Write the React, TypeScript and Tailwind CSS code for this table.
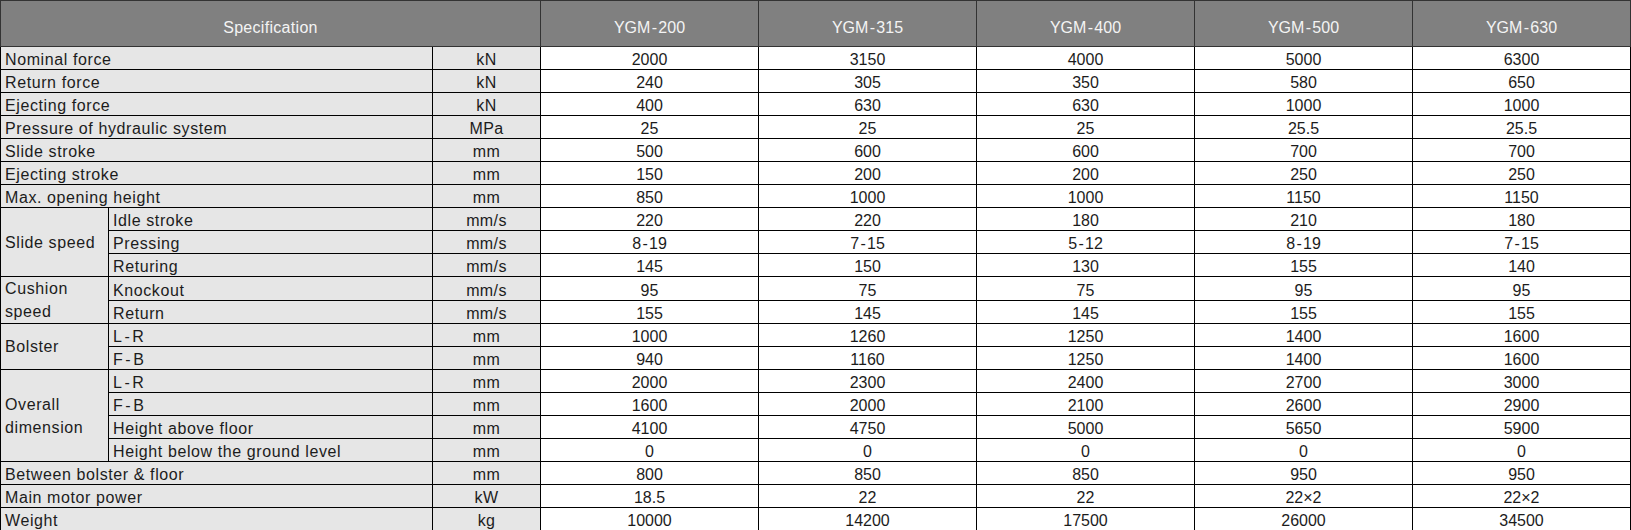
import React from 'react'

type Row = {
    label?: string
    group?: string[]
    span?: number
    sub?: string
    unit: string
    v: string[]
}

const models = ['YGM\u200a-\u200a200', 'YGM\u200a-\u200a315', 'YGM\u200a-\u200a400', 'YGM\u200a-\u200a500', 'YGM\u200a-\u200a630']

// widen the hyphen a little, like the source font does
const d = (s: string) => s.replace('-', '\u200a-\u200a')

const rows: Row[] = [
    { label: 'Nominal force', unit: 'kN', v: ['2000', '3150', '4000', '5000', '6300'] },
    { label: 'Return force', unit: 'kN', v: ['240', '305', '350', '580', '650'] },
    { label: 'Ejecting force', unit: 'kN', v: ['400', '630', '630', '1000', '1000'] },
    { label: 'Pressure of hydraulic system', unit: 'MPa', v: ['25', '25', '25', '25.5', '25.5'] },
    { label: 'Slide stroke', unit: 'mm', v: ['500', '600', '600', '700', '700'] },
    { label: 'Ejecting stroke', unit: 'mm', v: ['150', '200', '200', '250', '250'] },
    { label: 'Max. opening height', unit: 'mm', v: ['850', '1000', '1000', '1150', '1150'] },
    { group: ['Slide speed'], span: 3, sub: 'Idle stroke', unit: 'mm/s', v: ['220', '220', '180', '210', '180'] },
    { sub: 'Pressing', unit: 'mm/s', v: ['8-19', '7-15', '5-12', '8-19', '7-15'] },
    { sub: 'Returing', unit: 'mm/s', v: ['145', '150', '130', '155', '140'] },
    { group: ['Cushion', 'speed'], span: 2, sub: 'Knockout', unit: 'mm/s', v: ['95', '75', '75', '95', '95'] },
    { sub: 'Return', unit: 'mm/s', v: ['155', '145', '145', '155', '155'] },
    { group: ['Bolster'], span: 2, sub: 'L-R', unit: 'mm', v: ['1000', '1260', '1250', '1400', '1600'] },
    { sub: 'F-B', unit: 'mm', v: ['940', '1160', '1250', '1400', '1600'] },
    { group: ['Overall', 'dimension'], span: 4, sub: 'L-R', unit: 'mm', v: ['2000', '2300', '2400', '2700', '3000'] },
    { sub: 'F-B', unit: 'mm', v: ['1600', '2000', '2100', '2600', '2900'] },
    { sub: 'Height above floor', unit: 'mm', v: ['4100', '4750', '5000', '5650', '5900'] },
    { sub: 'Height below the ground level', unit: 'mm', v: ['0', '0', '0', '0', '0'] },
    { label: 'Between bolster & floor', unit: 'mm', v: ['800', '850', '850', '950', '950'] },
    { label: 'Main motor power', unit: 'kW', v: ['18.5', '22', '22', '22×2', '22×2'] },
    { label: 'Weight', unit: 'kg', v: ['10000', '14200', '17500', '26000', '34500'] },
]

const labelCell =
    'border border-black bg-[#e6e6e6] pl-[4px] text-left align-bottom leading-[18px] tracking-[0.6px] whitespace-nowrap'

export default function App() {
    return (
        <div className="h-[530px] w-[1631px] overflow-hidden bg-white font-['Liberation_Sans',Arial,sans-serif] text-[16px] text-[#1c1c1c]">
            <table className="w-[1630px] table-fixed border-collapse">
                <colgroup>
                    <col className="w-[108px]" />
                    <col className="w-[324px]" />
                    <col className="w-[108px]" />
                    <col className="w-[218px]" />
                    <col className="w-[218px]" />
                    <col className="w-[218px]" />
                    <col className="w-[218px]" />
                    <col className="w-[218px]" />
                </colgroup>
                <thead>
                    <tr className="h-[46px] bg-[#808080] text-[#f4f4f4]">
                        <th colSpan={3} className="border border-[#333] pt-[9px] align-middle font-normal tracking-[0.3px]">
                            Specification
                        </th>
                        {models.map((m) => (
                            <th key={m} className="border border-[#333] pt-[9px] align-middle font-normal">
                                {m}
                            </th>
                        ))}
                    </tr>
                </thead>
                <tbody>
                    {rows.map((r, i) => (
                        <tr key={i} className="h-[23px]">
                            {r.label && (
                                <td colSpan={2} className={labelCell}>
                                    {r.label}
                                </td>
                            )}
                            {r.group && (
                                <td
                                    rowSpan={r.span}
                                    className="border border-black bg-[#e6e6e6] pl-[4px] text-left align-middle leading-[23px] tracking-[0.6px] whitespace-nowrap"
                                >
                                    {r.group.map((g, j) => (
                                        <div key={j}>{g}</div>
                                    ))}
                                </td>
                            )}
                            {r.sub && <td className={labelCell}>{d(r.sub)}</td>}
                            <td className="border border-black bg-[#e6e6e6] text-center align-bottom leading-[18px] tracking-[0.4px]">
                                {r.unit}
                            </td>
                            {r.v.map((v, j) => (
                                <td key={j} className="border border-black bg-white text-center align-bottom leading-[18px]">
                                    {d(v)}
                                </td>
                            ))}
                        </tr>
                    ))}
                </tbody>
            </table>
        </div>
    )
}
